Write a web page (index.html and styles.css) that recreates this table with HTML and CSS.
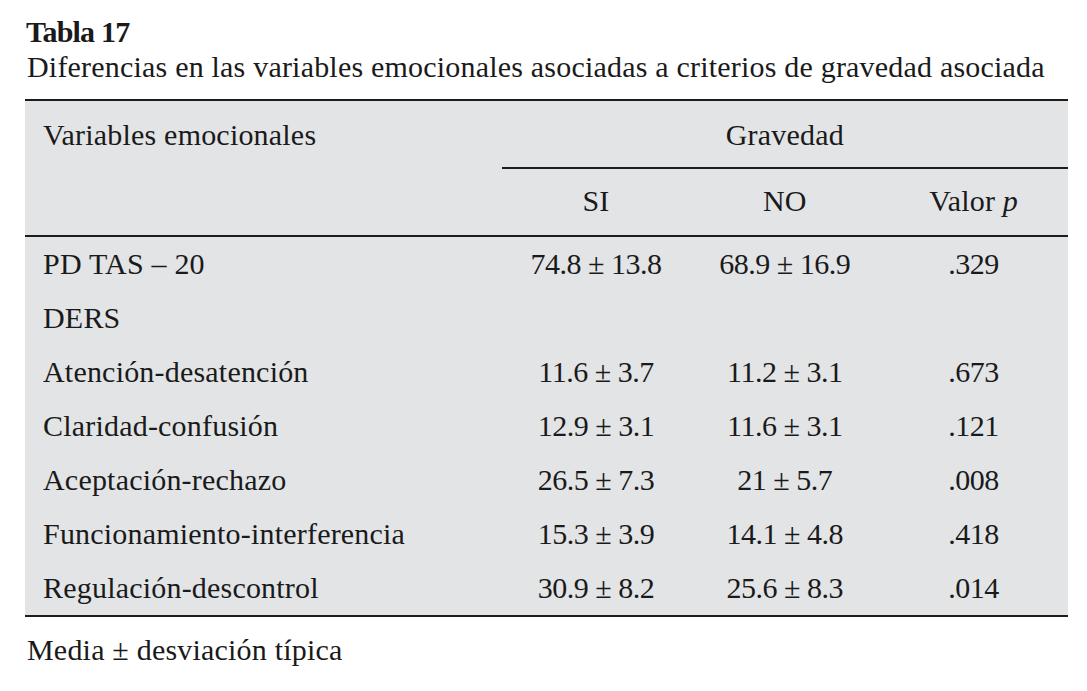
FILE: index.html
```html
<!DOCTYPE html>
<html lang="es">
<head>
<meta charset="utf-8">
<title>Tabla 17</title>
<link rel="stylesheet" href="styles.css">
</head>
<body>
<div class="page">
  <div class="caption">
    <div class="caption-label">Tabla 17</div>
    <div class="caption-text">Diferencias en las variables emocionales asociadas a criterios de gravedad asociada</div>
  </div>
  <table class="data">
    <colgroup>
      <col class="c-var">
      <col class="c-num">
      <col class="c-num">
      <col class="c-num">
    </colgroup>
    <thead>
      <tr class="h1">
        <th class="left">Variables emocionales</th>
        <th colspan="3" class="group">Gravedad</th>
      </tr>
      <tr class="h2">
        <th></th>
        <th class="sub">SI</th>
        <th class="sub">NO</th>
        <th class="sub">Valor <i>p</i></th>
      </tr>
    </thead>
    <tbody>
      <tr><td class="left">PD TAS – 20</td><td>74.8 ± 13.8</td><td>68.9 ± 16.9</td><td>.329</td></tr>
      <tr><td class="left">DERS</td><td></td><td></td><td></td></tr>
      <tr><td class="left">Atención-desatención</td><td>11.6 ± 3.7</td><td>11.2 ± 3.1</td><td>.673</td></tr>
      <tr><td class="left">Claridad-confusión</td><td>12.9 ± 3.1</td><td>11.6 ± 3.1</td><td>.121</td></tr>
      <tr><td class="left">Aceptación-rechazo</td><td>26.5 ± 7.3</td><td>21 ± 5.7</td><td>.008</td></tr>
      <tr><td class="left">Funcionamiento-interferencia</td><td>15.3 ± 3.9</td><td>14.1 ± 4.8</td><td>.418</td></tr>
      <tr><td class="left">Regulación-descontrol</td><td>30.9 ± 8.2</td><td>25.6 ± 8.3</td><td>.014</td></tr>
    </tbody>
  </table>
  <div class="note">Media ± desviación típica</div>
</div>
</body>
</html>
```

FILE: styles.css
```css
html, body {
  margin: 0;
  padding: 0;
  background: #ffffff;
}

.page {
  padding: 14px 19px 0 25px;
  font-family: "Liberation Serif", "Times New Roman", serif;
  color: #1a1a1a;
  font-size: 30px;
  letter-spacing: 0.2px;
}

.caption {
  padding-left: 1px;
  line-height: 35px;
}

.caption-label {
  font-weight: bold;
  letter-spacing: -0.8px;
}

.caption-text {
  font-weight: normal;
  padding-left: 1px;
}

.data {
  margin-top: 15px;
  width: 1043px;
  border-collapse: collapse;
  background: #e3e4e6;
  border-top: 2px solid #1c1c1c;
  border-bottom: 2px solid #1c1c1c;
  line-height: 34px;
}

.c-var { width: 477px; }
.c-num { width: 189px; }

.data th {
  font-weight: normal;
  text-align: center;
  padding: 0;
}

.data .h1 th {
  padding: 17px 0 15px;
}

.data .h1 th.left {
  text-align: left;
  padding-left: 18px;
  vertical-align: top;
}

.data .h1 th.group {
  border-bottom: 2px solid #1c1c1c;
}

.data .h2 th {
  padding: 15px 0 17px;
  border-bottom: 2px solid #1c1c1c;
}

.data td {
  text-align: center;
  padding: 10px 0;
  height: 34px;
  letter-spacing: -0.5px;
}

.data td.left {
  text-align: left;
  padding-left: 18px;
  letter-spacing: 0.2px;
}

.note {
  margin-top: 16px;
  padding-left: 2px;
  line-height: 34px;
}
```
